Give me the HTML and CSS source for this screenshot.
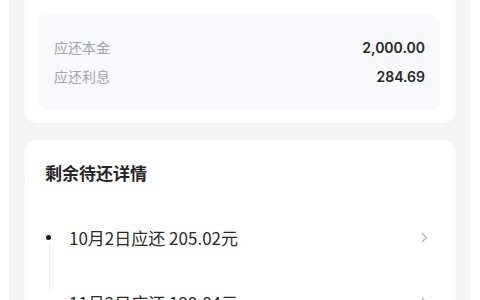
FILE: index.html
```html
<!DOCTYPE html>
<html lang="zh">
<head>
<meta charset="utf-8">
<link rel="stylesheet" href="styles.css">
</head>
<body>
<div class="screen">
  <section class="card card-top">
    <div class="summary">
      <div class="sum-row"><span class="label">应还本金</span><span class="value">2,000.00</span></div>
      <div class="sum-row"><span class="label">应还利息</span><span class="value">284.69</span></div>
    </div>
  </section>
  <section class="card card-detail">
    <h2 class="title">剩余待还详情</h2>
    <ul class="timeline">
      <li class="item">
        <span class="dot"></span>
        <span class="item-text">10月2日应还 205.02元</span>
        <svg class="chev" width="7" height="11" viewBox="0 0 7 11"><path d="M1 1l4.5 4.5L1 10" fill="none" stroke="#b4b4b4" stroke-width="1.3"/></svg>
      </li>
      <li class="item">
        <span class="dot"></span>
        <span class="item-text">11月2日应还 199.84元</span>
        <svg class="chev" width="7" height="11" viewBox="0 0 7 11"><path d="M1 1l4.5 4.5L1 10" fill="none" stroke="#b4b4b4" stroke-width="1.3"/></svg>
      </li>
    </ul>
  </section>
</div>
</body>
</html>
```
FILE: styles.css
```css
html, body {
  margin: 0;
  padding: 0;
  background: #ffffff;
  height: 300px;
  overflow: hidden;
}
body {
  font-family: "Noto Sans CJK SC", "Noto Sans", sans-serif;
  color: #222;
}
.screen {
  margin: 0 10px 0 9px;
  background: #f5f5f6;
  height: 300px;
  padding: 0 15px 0 16px;
  display: flex;
  flex-direction: column;
  gap: 17px;
}
.card {
  background: #fff;
  border-radius: 12px;
}
.card-top {
  border-radius: 0 0 12px 12px;
  padding: 15px 15px 13px 13px;
}
.summary {
  background: #f7f9fc;
  border-radius: 10px;
  padding: 22px 15px 24px 16px;
  display: flex;
  flex-direction: column;
  gap: 9px;
}
.sum-row {
  display: flex;
  justify-content: space-between;
  align-items: center;
  height: 20px;
}
.label {
  font-size: 14px;
  color: #a3a3a3;
}
.value {
  font-family: Inter, "Noto Sans", sans-serif;
  font-weight: 600;
  font-size: 14px;
  color: #262626;
}
.title {
  margin: 0;
  padding: 22px 0 0 20px;
  font-size: 17px;
  line-height: 22px;
  font-weight: 600;
  color: #262626;
}
.timeline {
  list-style: none;
  margin: 0;
  padding: 41px 0 0 0;
}
.item {
  position: relative;
  display: flex;
  align-items: center;
  height: 24px;
  padding: 0 27px 0 20px;
  margin-bottom: 41px;
}
.item::after {
  content: "";
  position: absolute;
  left: 24px;
  top: 19px;
  height: 46px;
  border-left: 1px solid #ececec;
}
.dot {
  width: 5px;
  height: 5px;
  border-radius: 50%;
  background: #1a1a1a;
  margin-left: 1px;
}
.item-text {
  flex: 1;
  margin-left: 18px;
  font-size: 17px;
  color: #2a2a2a;
}
.chev {
  display: block;
}
```
